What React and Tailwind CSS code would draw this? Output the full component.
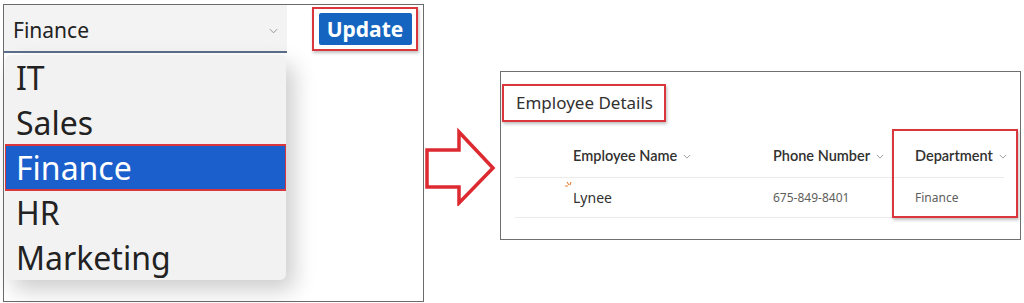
import React from "react";

const Chevron = ({ className = "" }) => (
  <svg viewBox="0 0 10 6" className={className} fill="none">
    <path d="M1 1l4 4 4-4" stroke="#8a8886" strokeWidth="1" />
  </svg>
);

const options = ["IT", "Sales", "Finance", "HR", "Marketing"];

const DropdownPanel = () => (
  <div className="ml-[3px] mt-[4px] w-[421px] h-[298px] border border-[#6b6b6b] bg-white shrink-0">
    <div className="flex items-start">
      <div className="relative">
        <div className="w-[283px] h-[48px] bg-[#f3f3f3] border-b-2 border-[#5b6f8e] flex items-center justify-between pl-[9px] pr-[9px] pt-[6px]">
          <span className="text-[21px] text-[#222]">Finance</span>
          <Chevron className="w-[9px] h-[6px]" />
        </div>
        <div className="absolute left-[1px] top-[50px] w-[281px] bg-[#f2f2f2] rounded-[6px] shadow-[8px_10px_22px_rgba(0,0,0,0.2)] overflow-hidden">
          {options.map((o) => (
            <div
              key={o}
              className={
                o === "Finance"
                  ? "h-[45px] leading-[45px] pl-[11px] text-[32px] bg-[#1b5fcd] text-white outline-2 outline-[#d9363e] -outline-offset-1"
                  : "h-[45px] leading-[45px] pl-[11px] text-[32px] text-[#222]"
              }
            >
              {o}
            </div>
          ))}
        </div>
      </div>
      <div className="ml-[25px] mt-[2px] w-[106px] h-[44px] border-2 border-[#d9363e] shadow-[1px_2px_3px_rgba(0,0,0,0.25)] flex items-center justify-center">
        <button className="w-[93px] h-[32px] bg-[#1565c0] rounded-[2px] text-white font-bold text-[21px] leading-none">
          Update
        </button>
      </div>
    </div>
  </div>
);

const Arrow = () => (
  <svg width="76" height="80" viewBox="0 0 76 80" className="mt-[126px] shrink-0">
    <polygon
      points="3,24 35,24 35,6 69,42 35,77 35,61 3,61"
      fill="none"
      stroke="#dc2a30"
      strokeWidth="3.5"
      strokeLinejoin="miter"
    />
  </svg>
);

const DetailsPanel = () => (
  <div className="relative mt-[71px] w-[521px] h-[169px] border border-[#6f6f6f] bg-white shrink-0">
    <div className="ml-[1px] mt-[12px] w-[164px] h-[38px] border-2 border-[#d9363e] shadow-[1px_2px_3px_rgba(0,0,0,0.25)] flex items-center pl-[12px]">
      <span className="text-[17px] text-[#323130]">Employee Details</span>
    </div>
    <div className="ml-[14px] mr-[16px] mt-[4px]">
      <div className="grid grid-cols-[58px_200px_142px_1fr] h-[52px] items-end border-b border-[#edebe9] text-[14.5px] font-semibold text-[#323130] font-['Lato',sans-serif]">
        <div />
        <div className="flex items-center gap-[6px] pb-[10px]">
          Employee Name <Chevron className="w-[8px] h-[5px]" />
        </div>
        <div className="flex items-center gap-[6px] pb-[10px]">
          Phone Number <Chevron className="w-[8px] h-[5px]" />
        </div>
        <div className="flex items-center gap-[6px] pb-[10px]">
          Department <Chevron className="w-[8px] h-[5px]" />
        </div>
      </div>
      <div className="grid grid-cols-[58px_200px_142px_1fr] h-[40px] items-center border-b border-[#edebe9]">
        <div />
        <div className="relative text-[14px] text-[#323130]">
          <svg width="9" height="8" viewBox="0 0 9 8" className="absolute left-[-9px] top-[-6px]">
            <path d="M1 5h3M3 1l2 3M7 1l-1 3" stroke="#e8813a" strokeWidth="1.1" />
          </svg>
          Lynee
        </div>
        <div className="text-[12px] text-[#605e5c]">675-849-8401</div>
        <div className="text-[12px] text-[#605e5c]">Finance</div>
      </div>
    </div>
    <div className="absolute left-[391px] top-[57px] w-[126px] h-[89px] border-2 border-[#d9363e] shadow-[1px_2px_3px_rgba(0,0,0,0.25)]" />
  </div>
);

export default function App() {
  return (
    <div className="w-[1024px] h-[303px] bg-white flex items-start font-['Noto_Sans',sans-serif] overflow-hidden">
      <DropdownPanel />
      <Arrow />
      <DetailsPanel />
    </div>
  );
}
